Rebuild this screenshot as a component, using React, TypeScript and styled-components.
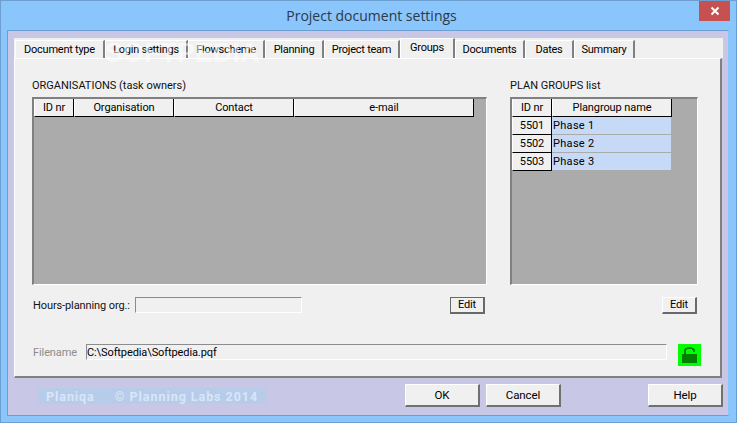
import React from "react";
import styled, { createGlobalStyle } from "styled-components";

const Global = createGlobalStyle`
  html, body { margin: 0; padding: 0; background: #8ac5fc; }
  * { box-sizing: border-box; }
`;

const Window = styled.div`
  position: relative;
  width: 737px;
  height: 423px;
  display: flex;
  flex-direction: column;
  background: #8ac5fc;
  border: 1px solid #6c9fd0;
  font-family: Roboto, "Liberation Sans", Arial, sans-serif;
  font-size: 11px;
  letter-spacing: -0.1px;
  color: #000;
  overflow: hidden;
  white-space: nowrap;
`;

const TitleBar = styled.div`
  height: 29px;
  flex: none;
  display: flex;
  align-items: center;
  justify-content: center;
  padding: 0 0 0 6px;
  font-family: "Open Sans", "Noto Sans", sans-serif;
  font-size: 14px;
  letter-spacing: 0;
  color: #2c3a48;
`;

const CloseButton = styled.div`
  position: absolute;
  top: 0;
  right: 6px;
  width: 31px;
  height: 20px;
  display: flex;
  align-items: center;
  justify-content: center;
  background: #c75050;
`;

const Client = styled.div`
  flex: 1;
  margin: 0 7px 6px 6px;
  padding: 7px 6px 0 6px;
  background: #c8c8e6;
  border: 1px solid #6c9fd0;
  border-right-color: #8ac5fc;
  border-bottom-color: #6c9fd0;
  display: flex;
  flex-direction: column;
`;

const TabStrip = styled.div`
  position: relative;
  height: 20px;
  flex: none;
  display: flex;
  align-items: flex-end;
  background: #f0f0f0;
  padding-left: 1px;
  margin-right: -1px;
`;

const Tab = styled.div<{ $w: number; $active?: boolean }>`
  width: ${(p) => p.$w}px;
  height: ${(p) => (p.$active ? 20 : 18)}px;
  padding-bottom: ${(p) => (p.$active ? 3 : 0)}px;
  flex: none;
  display: flex;
  align-items: center;
  justify-content: center;
  letter-spacing: -0.25px;
  background: #f0f0f0;
  border-left: 1px solid #fff;
  border-top: 1px solid #fff;
  border-right: 2px solid #808080;
`;

const Watermark = styled.div`
  position: absolute;
  left: 91px;
  top: 0;
  font-family: "Liberation Sans", Arial, sans-serif;
  font-size: 27px;
  font-weight: bold;
  letter-spacing: 0;
  color: #fff;
  opacity: 0.5;
  pointer-events: none;
`;

const Page = styled.div`
  height: 320px;
  flex: none;
  display: flex;
  flex-direction: column;
  padding: 18px 23px 0 17px;
  background: #f0f0f0;
  border-left: 1px solid #fff;
  border-top: 1px solid #fff;
  border-right: 2px solid #808080;
  border-bottom: 2px solid #808080;
`;

const Columns = styled.div`
  display: flex;
  gap: 23px;
`;

const Column = styled.div<{ $w: number }>`
  width: ${(p) => p.$w}px;
  flex: none;
  display: flex;
  flex-direction: column;
`;

const SectionLabel = styled.div`
  height: 20px;
  padding-top: 2px;
  line-height: 14px;
  letter-spacing: 0;
  color: #101010;
`;

const GridBox = styled.div`
  height: 188px;
  background: #ababab;
  border-top: 2px solid #808080;
  border-left: 2px solid #808080;
  border-right: 1px solid #fff;
  border-bottom: 1px solid #fff;
`;

const Row = styled.div`
  display: flex;
  height: 18px;
`;

const HeadCell = styled.div<{ $w: number }>`
  width: ${(p) => p.$w}px;
  flex: none;
  display: flex;
  align-items: center;
  justify-content: center;
  padding-bottom: 1px;
  background: #f0f0f0;
  border-left: 1px solid #fff;
  border-right: 1px solid #000;
  border-bottom: 1px solid #000;
`;

const DataCell = styled.div<{ $w: number }>`
  width: ${(p) => p.$w}px;
  flex: none;
  display: flex;
  align-items: center;
  padding: 0 0 1px 1px;
  letter-spacing: 0.3px;
  background: #c6d9f7;
  border-right: 1px solid #ababab;
  border-bottom: 1px solid #ababab;
`;

const ControlRow = styled.div<{ $pad: number }>`
  display: flex;
  align-items: center;
  justify-content: space-between;
  margin-top: 11px;
  padding-right: ${(p) => p.$pad}px;
  height: 18px;
`;

const FieldGroup = styled.div`
  display: flex;
  align-items: center;
`;

const FieldLabel = styled.span<{ $w: number; $muted?: boolean }>`
  width: ${(p) => p.$w}px;
  flex: none;
  padding-left: 1px;
  color: ${(p) => (p.$muted ? "#8c8c8c" : "#101010")};
`;

const Sunken = styled.div<{ $w: number }>`
  width: ${(p) => p.$w}px;
  height: 16px;
  flex: none;
  display: flex;
  align-items: center;
  background: #f0f0f0;
  border-top: 1px solid #8c8c8c;
  border-left: 1px solid #8c8c8c;
  border-right: 1px solid #fff;
  border-bottom: 1px solid #fff;
`;

const EditButton = styled.div<{ $focus?: boolean }>`
  width: 35px;
  height: 17px;
  display: flex;
  align-items: center;
  justify-content: center;
  background: #f0f0f0;
  border-top: 1px solid ${(p) => (p.$focus ? "#696969" : "#fff")};
  border-left: 1px solid ${(p) => (p.$focus ? "#696969" : "#fff")};
  border-right: 2px solid #696969;
  border-bottom: 2px solid #696969;
`;

const FileRow = styled.div`
  display: flex;
  align-items: flex-start;
  margin-top: 30px;
`;

const FileField = styled.div`
  display: flex;
  align-items: center;
  height: 16px;
`;

const LockBox = styled.div`
  width: 23px;
  height: 22px;
  margin-left: 11px;
  flex: none;
  display: flex;
  background: #00ff00;
`;

const Footer = styled.div`
  flex: 1;
  display: flex;
  align-items: flex-start;
  padding-top: 6px;
  margin-right: -1px;
`;

const Brand = styled.div`
  width: 228px;
  height: 16px;
  margin: 4px 139px 0 24px;
  flex: none;
  display: flex;
  align-items: center;
  padding-left: 8px;
  gap: 20px;
  background: #b6cce9;
  color: #d9e6f8;
  font-size: 12.5px;
  font-weight: bold;
  letter-spacing: 0.95px;
`;

const DialogButton = styled.div<{ $after?: number }>`
  width: 75px;
  height: 23px;
  margin-right: ${(p) => p.$after ?? 0}px;
  flex: none;
  display: flex;
  align-items: center;
  justify-content: center;
  font-size: 11.5px;
  background: #f0f0f0;
  border-top: 1px solid #fff;
  border-left: 1px solid #fff;
  border-right: 2px solid #707070;
  border-bottom: 2px solid #707070;
`;

const tabs: [string, number, boolean?][] = [
  ["Document type", 90],
  ["Login settings", 83],
  ["Flowscheme", 77],
  ["Planning", 59],
  ["Project team", 76],
  ["Groups", 55, true],
  ["Documents", 70],
  ["Dates", 49],
  ["Summary", 61],
];

const orgCols: [string, number][] = [
  ["ID nr", 40],
  ["Organisation", 100],
  ["Contact", 120],
  ["e-mail", 180],
];

const plan: [string, string][] = [
  ["5501", "Phase 1"],
  ["5502", "Phase 2"],
  ["5503", "Phase 3"],
];

export default function App() {
  return (
    <Window>
      <Global />
      <TitleBar>Project document settings</TitleBar>
      <CloseButton>
        <svg width="10" height="10" viewBox="0 0 10 10">
          <path d="M1.5 1.5 L8.5 8.5 M8.5 1.5 L1.5 8.5" stroke="#fff" strokeWidth="2" />
        </svg>
      </CloseButton>
      <Client>
        <TabStrip>
          {tabs.map(([label, w, active]) => (
            <Tab key={label} $w={w} $active={active}>
              {label}
            </Tab>
          ))}
          <Watermark>SOFTPEDIA</Watermark>
        </TabStrip>
        <Page>
          <Columns>
            <Column $w={455}>
              <SectionLabel>ORGANISATIONS (task owners)</SectionLabel>
              <GridBox>
                <Row>
                  {orgCols.map(([label, w]) => (
                    <HeadCell key={label} $w={w}>
                      {label}
                    </HeadCell>
                  ))}
                </Row>
              </GridBox>
              <ControlRow $pad={2}>
                <FieldGroup>
                  <FieldLabel $w={103}>Hours-planning org.:</FieldLabel>
                  <Sunken $w={167} />
                </FieldGroup>
                <EditButton $focus>Edit</EditButton>
              </ControlRow>
            </Column>
            <Column $w={188}>
              <SectionLabel>PLAN GROUPS list</SectionLabel>
              <GridBox>
                <Row>
                  <HeadCell $w={40}>ID nr</HeadCell>
                  <HeadCell $w={120}>Plangroup name</HeadCell>
                </Row>
                {plan.map(([id, name]) => (
                  <Row key={id}>
                    <HeadCell $w={40}>{id}</HeadCell>
                    <DataCell $w={120}>{name}</DataCell>
                  </Row>
                ))}
              </GridBox>
              <ControlRow $pad={1}>
                <span />
                <EditButton>Edit</EditButton>
              </ControlRow>
            </Column>
          </Columns>
          <FileRow>
            <FileField>
              <FieldLabel $w={54} $muted>
                Filename
              </FieldLabel>
              <Sunken $w={581}>C:\Softpedia\Softpedia.pqf</Sunken>
            </FileField>
            <LockBox>
              <svg width="23" height="22" viewBox="0 0 23 22" shapeRendering="crispEdges">
                <path
                  d="M6 10 V5 H7 V4 H9 V3 H14 V4 H16 V5 H17 V8 H15 V6 H14 V5 H9 V6 H8 V10 Z"
                  fill="#007f00"
                />
                <rect x="4" y="10" width="15" height="9" fill="#007f00" />
              </svg>
            </LockBox>
          </FileRow>
        </Page>
        <Footer>
          <Brand>
            <span>Planiqa</span>
            <span>© Planning Labs 2014</span>
          </Brand>
          <DialogButton $after={6}>OK</DialogButton>
          <DialogButton $after={87}>Cancel</DialogButton>
          <DialogButton>Help</DialogButton>
        </Footer>
      </Client>
    </Window>
  );
}
